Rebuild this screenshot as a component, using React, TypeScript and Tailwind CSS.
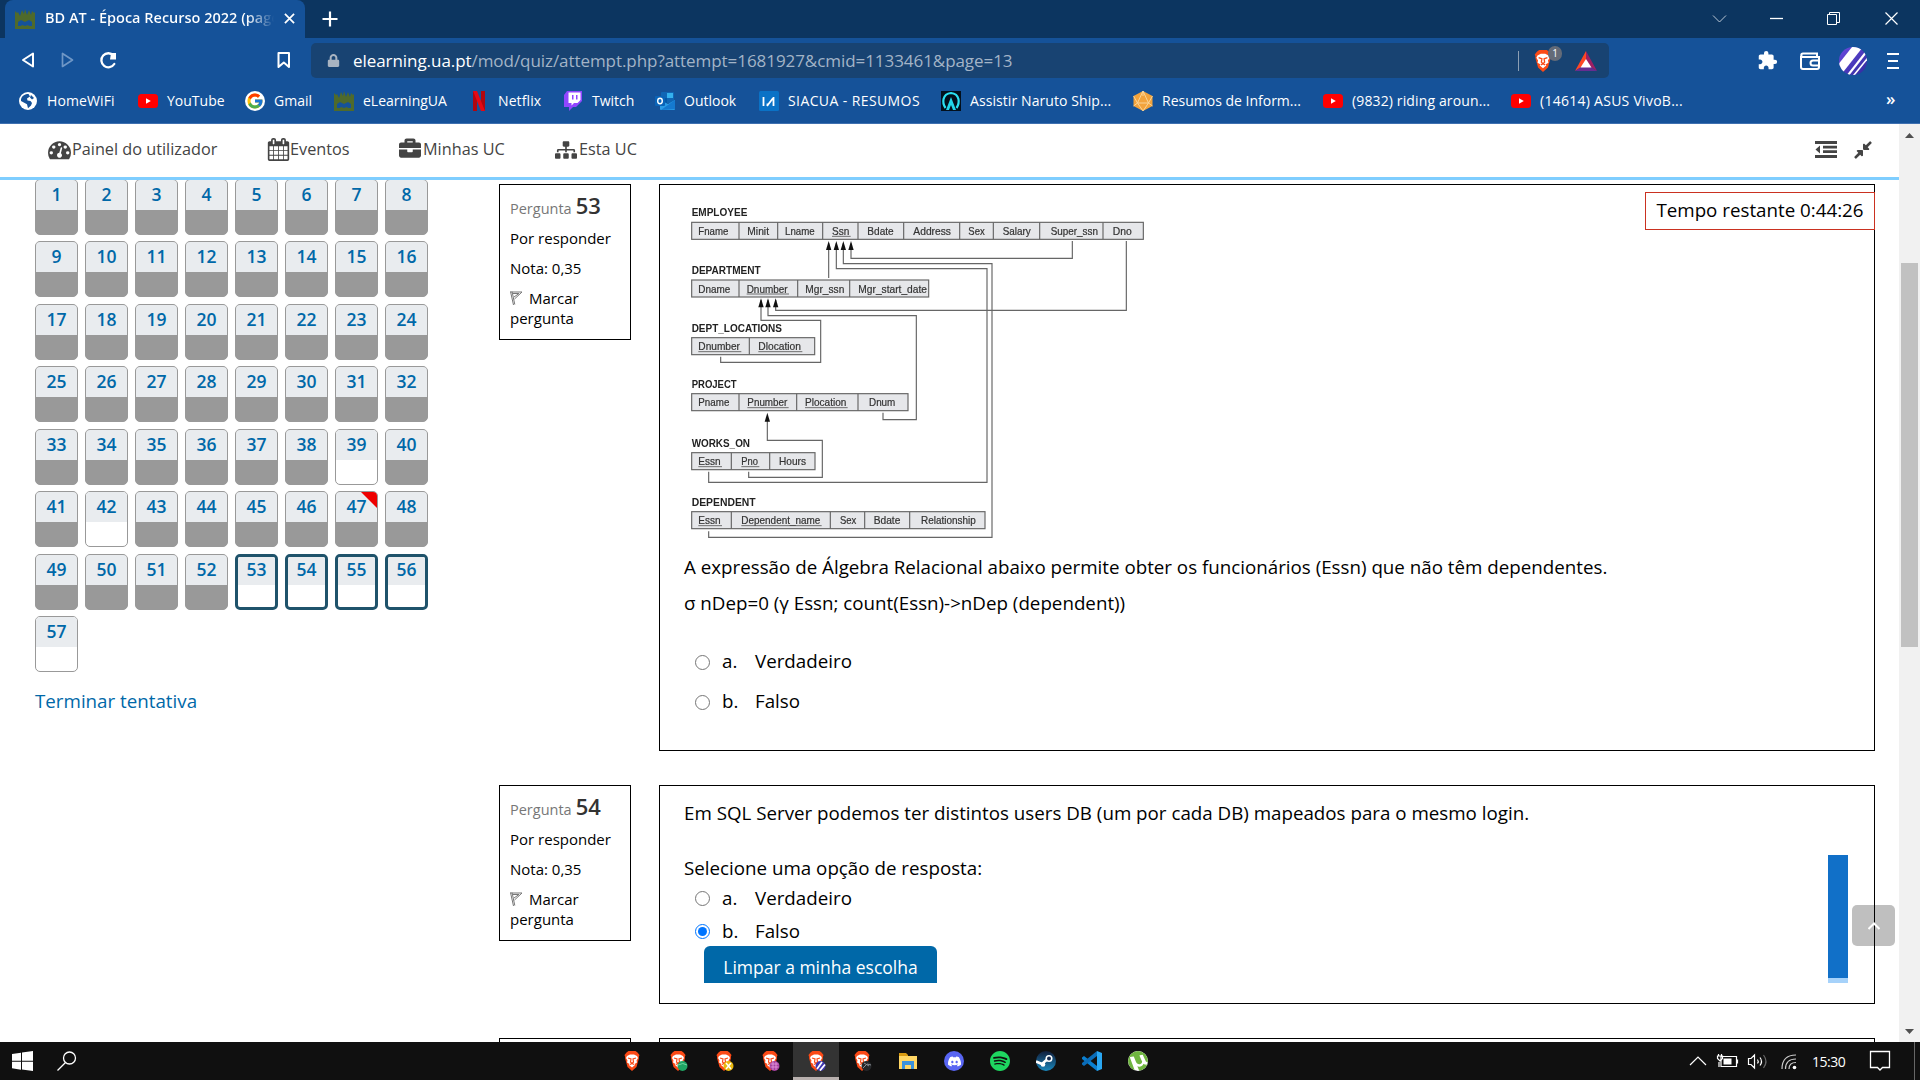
import React from "react";
import { FaBriefcase, FaSitemap, FaCompressAlt, FaLock } from "react-icons/fa";
import { MdExtension } from "react-icons/md";
import { SiDiscord, SiSpotify, SiUtorrent } from "react-icons/si";
import { FcGoogle } from "react-icons/fc";

/* ---------- browser icons ---------- */

const UaLogo = () => (
  <svg className="block h-5 w-5" viewBox="0 0 20 20">
    <path d="M0 20V2l2 2 1-1 2 4 2-6 2 4 1-5 2 6 2-5 2 5 1-4 2 2 1-1v17z" fill="#4f6a2b" />
    <path d="M3 13l3-2 4 2 4-2 3 2v4h-3l-1-1-3 1-3-1-1 1H3z" fill="#155299" />
  </svg>
);

const GlobeIcon = () => (
  <svg className="block h-5 w-5" viewBox="0 0 20 20">
    <circle cx="10" cy="10" r="9" fill="#fff" />
    <path d="M3 8.2C4 4.600 7 3 10.500 3L12 5.500 9 7.500l.5 2 3 .5 1.500 2-1 2.500-3 2.700-1-4L3 10z" fill="#155299" />
    <path d="M13 4l3 3-2 1.500-2-2z" fill="#155299" />
  </svg>
);

const YouTube = () => (
  <svg className="block h-5 w-5" viewBox="0 0 20 20">
    <rect x="0" y="3" width="20" height="14" rx="3.500" fill="#f00" />
    <path d="M8 7.200v5.600l4.800-2.800z" fill="#fff" />
  </svg>
);

const GoogleBadge = () => (
  <div className="flex h-5 w-5 items-center justify-center rounded-full bg-white">
    <FcGoogle size={18} />
  </div>
);

const Netflix = () => (
  <svg className="block h-5 w-5" viewBox="0 0 20 20">
    <path d="M2 0h4v20H2z" fill="#b1060f" />
    <path d="M10 0h4v20h-4z" fill="#b1060f" />
    <path d="M2 0h4l8 20h-4z" fill="#e50914" />
  </svg>
);

const Twitch = () => (
  <svg className="block h-5 w-5" viewBox="0 0 20 20">
    <path d="M3 0L0 4v12h5v4l4-4h3l6-6V0z" fill="#9146ff" />
    <path d="M4.500 1.500H16.500V9L13.500 12H10L7.500 14.500V12H4.500z" fill="#fff" />
    <path d="M8 4h1.500v4.500H8zM12 4h1.500v4.500H12z" fill="#9146ff" />
  </svg>
);

const Outlook = () => (
  <svg className="block h-5 w-5" viewBox="0 0 20 20">
    <rect x="6" y="1" width="13" height="11" rx="1" fill="#1066b5" />
    <rect x="12" y="2" width="6" height="5" fill="#35b1ee" />
    <rect x="6" y="7" width="6" height="5" fill="#0358a7" />
    <path d="M5 9l8 4 7-4v9a1 1 0 01-1 1H6a1 1 0 01-1-1z" fill="#2a9be6" />
    <path d="M20 9v9l-14 1z" fill="#1579cf" />
    <rect x="0" y="5" width="10" height="10" rx="1" fill="#0a64b8" />
    <ellipse cx="5" cy="10" rx="2.300" ry="2.700" fill="none" stroke="#fff" strokeWidth="1.400" />
  </svg>
);

const Siacua = () => (
  <svg className="block h-5 w-5" viewBox="0 0 20 20">
    <rect width="20" height="20" rx="1.500" fill="#0a72c6" />
    <path d="M4.500 6v9M8 15l6.500-8.500M8.500 12.500V15M14.500 6v9" fill="none" stroke="#fff" strokeWidth="1.800" />
  </svg>
);

const Anime = () => (
  <svg className="block h-5 w-5" viewBox="0 0 20 20">
    <rect width="20" height="20" fill="#03101d" />
    <path d="M4.500 17C1 12 1 3 10 2c9 1 9 10 5.500 15" fill="none" stroke="#2be0f2" strokeWidth="2.200" />
    <path d="M5 19l5-13 5 13h-3l-2-5-2 5z" fill="#22d5ea" />
  </svg>
);

const Dice = () => (
  <svg className="block h-5 w-5" viewBox="0 0 20 20">
    <path d="M10 0l9.500 5v10L10 20 .5 15V5z" fill="#f2a33c" />
    <path d="M10 0l5.500 12h-11zM4.500 12L10 20l5.500-8M.5 5L4.500 12 .5 15M19.500 5l-4 7 4 3M10 0v5" fill="none" stroke="#fbd9a0" strokeWidth=".9" />
  </svg>
);

const BraveIcon = ({ badge }: { badge?: React.ReactNode }) => (
  <svg className="block h-full w-full" viewBox="0 0 20 20">
    <path d="M4.500 1.500L6.500 0h7l2 1.500L17.500 4l-.7 2 .2 1-2.500 9-4.500 4-4.500-4L3 7l.2-1-.7-2z" fill="#fb4a16" />
    <path d="M5 5l3-1.500h4L15 5l1 2-1.500 2.500.500 2-2.500 1.500.5 1-3 2.500L7 14l.5-1L5 11.500l.500-2L4 7z" fill="#fff" />
    <path d="M6 7l3 1-.5 3L10 12.500 11.500 11 11 8l3-1M8 13.500l2-1 2 1" fill="none" stroke="#fb4a16" strokeWidth="1.200" />
    {badge}
  </svg>
);

const bookmarks = [
  { icon: <GlobeIcon />, label: "HomeWiFi", w: "w-[120px]", t: "tracking-[0.1px]" },
  { icon: <YouTube />, label: "YouTube", w: "w-[107px]", t: "" },
  { icon: <GoogleBadge />, label: "Gmail", w: "w-[89px]", t: "" },
  { icon: <UaLogo />, label: "eLearningUA", w: "w-[137px]", t: "" },
  { icon: <Netflix />, label: "Netflix", w: "w-[93px]", t: "tracking-[0.1px] -ml-[2px]" },
  { icon: <Twitch />, label: "Twitch", w: "w-[91px]", t: "-ml-px" },
  { icon: <Outlook />, label: "Outlook", w: "w-[104px]", t: "" },
  { icon: <Siacua />, label: "SIACUA - RESUMOS", w: "w-[182px]", t: "tracking-[0.4px]" },
  { icon: <Anime />, label: "Assistir Naruto Ship...", w: "w-[192px]", t: "tracking-[0.08px]" },
  { icon: <Dice />, label: "Resumos de Inform...", w: "w-[190px]", t: "" },
  { icon: <YouTube />, label: "(9832) riding aroun...", w: "w-[188px]", t: "tracking-[0.13px]" },
  { icon: <YouTube />, label: "(14614) ASUS VivoB...", w: "w-[190px]", t: "tracking-[0.27px]" },
];

function TabStrip() {
  return (
    <div className="flex h-[38px] items-stretch bg-[#0c3560] pl-[5px]">
      <div className="flex w-[300px] items-center rounded-t-lg bg-[#155299] pl-[10px]">
        <UaLogo />
        <div className="-mt-[2px] ml-[10px] w-[229px] overflow-hidden bg-linear-to-r from-white from-88% to-transparent bg-clip-text text-[14.5px] font-semibold whitespace-nowrap text-transparent">
          BD AT - Época Recurso 2022 (page
        </div>
        <svg className="-mt-px ml-[10px] h-[11px] w-[11px] shrink-0" viewBox="0 0 12 12" stroke="#fff" strokeWidth="1.900">
          <path d="M1 1l10 10M11 1L1 11" />
        </svg>
      </div>
      <svg className="mt-[11px] ml-[17px] h-4 w-4" viewBox="0 0 16 16" stroke="#fff" strokeWidth="2.200">
        <path d="M8 .5v15M.5 8h15" />
      </svg>
      <div className="ml-auto flex items-center">
        <svg className="h-[38px] w-[220px]" viewBox="1700 0 220 38" fill="none" stroke="#fff" strokeWidth="1">
          <path d="M1713 15.500l6.500 6.500 6.500-6.500" stroke="#bcc8d6" />
          <path d="M1770 18.500h13" strokeWidth="1.300" />
          <path d="M1827.500 14.500h9v10h-9zM1829.500 14.500v-2h10v10h-3" />
          <path d="M1885.500 12.500l12 12M1897.500 12.500l-12 12" strokeWidth="1.200" />
        </svg>
      </div>
    </div>
  );
}

function Toolbar() {
  return (
    <div className="flex h-[45px] items-center">
      <svg className="h-[45px] w-[311px] shrink-0" viewBox="0 38 311 45" fill="none" stroke="#fff" strokeWidth="2" strokeLinejoin="round">
        <path d="M33 53.500v13L23 60z" />
        <path d="M62.500 53.500v13l10-6.500z" stroke="#6f97c6" strokeWidth="1.700" />
        <path d="M113.500 55.500a7 7 0 10.8 8.500" strokeWidth="2.300" strokeLinecap="round" />
        <path d="M111 53h5v6.500h-6z" fill="#fff" stroke="none" />
        <path d="M278.500 53h10.500v14l-5.200-4.500-5.300 4.500z" />
      </svg>
      <div className="flex h-[35px] w-[1298px] items-center rounded-[5px] bg-[#184372]">
        <FaLock size={13} className="ml-[16px] text-[#a9b4c1]" />
        <div className="ml-[13px] text-[17px] tracking-[-0.06px] whitespace-nowrap text-[#a3b4c7]">
          <span className="text-white">elearning.ua.pt</span>/mod/quiz/attempt.php?attempt=1681927&amp;cmid=1133461&amp;page=13
        </div>
        <div className="ml-auto h-5 w-px bg-[#8c9fb4]" />
        <div className="relative ml-[13px] h-[22px] w-[22px]">
          <BraveIcon />
          <div className="absolute -top-[4px] left-[16px] flex h-[15px] w-[14px] items-center justify-center rounded-full bg-[#646b78] text-[10px] text-white">1</div>
        </div>
        <svg className="mr-[12px] ml-[21px] h-5 w-[22px]" viewBox="0 0 22 20">
          <path d="M11 0L0 20l11-7z" fill="#ff4724" />
          <path d="M11 0l11 20-11-7z" fill="#9e1f63" />
          <path d="M0 20h22l-6-4H6z" fill="#662d91" />
          <path d="M11 8l5.500 8.500h-11z" fill="#fff" />
        </svg>
      </div>
      <MdExtension size={21} className="ml-[148px] text-white" />
      <svg className="ml-[22px] h-[18px] w-5" viewBox="0 0 20 18" fill="none" stroke="#fff" strokeWidth="2">
        <path d="M1 4v11a2 2 0 002 2h14a2 2 0 002-2V5H3a1.500 1.500 0 010-3.500h14V5" />
        <path d="M19 8.500h-6a2.500 2.500 0 000 5h6" />
      </svg>
      <svg className="ml-[19px] h-7 w-7" viewBox="0 0 28 28">
        <defs>
          <clipPath id="avatar"><circle cx="14" cy="14" r="14" /></clipPath>
          <linearGradient id="avatarFill" x1="0" y1="0" x2="1" y2="1"><stop stopColor="#6a4be0" /><stop offset="1" stopColor="#2f2a9c" /></linearGradient>
        </defs>
        <g clipPath="url(#avatar)">
          <rect width="28" height="28" fill="url(#avatarFill)" />
          <path d="M-2 26L20-2" stroke="#fff" strokeWidth="8.500" />
          <path d="M6 32L28 4" stroke="#fff" strokeWidth="2.200" />
          <path d="M11 33L32 7" stroke="#fff" strokeWidth="1.600" />
        </g>
      </svg>
      <svg className="ml-[20px] h-4 w-3" viewBox="0 0 12 16" stroke="#fff" strokeWidth="2"><path d="M0 1h12M1 8h10M0 15h12" /></svg>
    </div>
  );
}

function Bookmarks() {
  return (
    <div className="flex h-[41px] items-center border-b border-[#3f70b0] pb-[5px] pl-[18px] text-[14px] text-white">
      {bookmarks.map((b) => (
        <div key={b.label} className={`flex shrink-0 items-center gap-[9px] whitespace-nowrap ${b.w}`}>
          <div className="w-5 shrink-0">{b.icon}</div>
          <span className={`-mt-px ${b.t}`}>{b.label}</span>
        </div>
      ))}
      <span className="-mt-[4px] ml-[185px] text-[17px] leading-none font-semibold">»</span>
    </div>
  );
}

/* ---------- page ---------- */

const GaugeIcon = () => (
  <svg className="h-[23px] w-[23px]" viewBox="0 0 1792 1792" fill="currentColor">
    <path d="M384 1152q0-53-37.500-90.500t-90.500-37.500-90.500 37.500-37.500 90.500 37.500 90.500 90.500 37.500 90.500-37.500 37.500-90.500zm192-448q0-53-37.500-90.500t-90.500-37.500-90.500 37.500-37.500 90.500 37.500 90.500 90.500 37.500 90.500-37.500 37.500-90.500zm428 481l101-382q6-26-7.500-48.500t-38.500-29.500-48 6.500-30 39.500l-101 382q-60 5-107 43.500t-63 98.500q-20 77 20 146t117 89 146-20 89-117q16-60-6-117t-72-91zm660-33q0-53-37.500-90.500t-90.500-37.500-90.500 37.500-37.500 90.500 37.500 90.500 90.500 37.500 90.500-37.500 37.500-90.500zm-640-640q0-53-37.500-90.500t-90.500-37.500-90.500 37.500-37.500 90.500 37.500 90.500 90.500 37.500 90.500-37.500 37.500-90.500zm448 192q0-53-37.500-90.500t-90.500-37.500-90.500 37.500-37.500 90.500 37.500 90.500 90.500 37.500 90.500-37.500 37.500-90.500zm320 448q0 261-141 483-19 29-54 29h-1402q-35 0-54-29-141-221-141-483 0-182 71-348t191-286 286-191 348-71 348 71 286 191 191 286 71 348z" />
  </svg>
);

const CalendarIcon = () => (
  <svg className="-mt-px h-[23px] w-[23px]" viewBox="0 0 1792 1792" fill="currentColor">
    <path d="M192 1664h288v-288h-288v288zm352 0h320v-288h-320v288zm-352-352h288v-320h-288v320zm352 0h320v-320h-320v320zm-352-384h288v-288h-288v288zm736 736h320v-288h-320v288zm-384-736h320v-288h-320v288zm768 736h288v-288h-288v288zm-384-352h320v-320h-320v320zm-352-864v-288q0-13-9.500-22.500t-22.500-9.500h-64q-13 0-22.500 9.500t-9.500 22.500v288q0 13 9.500 22.500t22.500 9.500h64q13 0 22.500-9.500t9.500-22.500zm736 864h288v-320h-288v320zm-384-384h320v-288h-320v288zm384 0h288v-288h-288v288zm32-480v-288q0-13-9.500-22.500t-22.500-9.500h-64q-13 0-22.500 9.500t-9.500 22.500v288q0 13 9.500 22.500t22.500 9.500h64q13 0 22.500-9.500t9.500-22.500zm384-64v1280q0 52-38 90t-90 38h-1408q-52 0-90-38t-38-90v-1280q0-52 38-90t90-38h128v-96q0-66 47-113t113-47h64q66 0 113 47t47 113v96h384v-96q0-66 47-113t113-47h64q66 0 113 47t47 113v96h128q52 0 90 38t38 90z" />
  </svg>
);

function PageNav() {
  return (
    <div className="flex h-[56px] shrink-0 items-center border-b-[3px] border-[#7fceff] pb-[2px] pl-[48px] text-[16.25px] text-[#444]">
      <div className="flex w-[219px] items-center gap-px"><GaugeIcon /><span>Painel do utilizador</span></div>
      <div className="flex w-[132px] items-center gap-0"><CalendarIcon /><span>Eventos</span></div>
      <div className="flex w-[156px] items-center gap-[2px]"><FaBriefcase size={22} className="-mt-[3px]" /><span>Minhas UC</span></div>
      <div className="flex items-center gap-[2px]"><FaSitemap size={22} /><span>Esta UC</span></div>
      <svg className="ml-auto h-[17px] w-[22px]" viewBox="0 0 22 17" fill="#444">
        <path d="M0 0h22v3H0zM8 4.800h14v2.700H8zM8 9.300h14V12H8zM0 14h22v3H0zM5 4.500v8L.5 8.500z" />
      </svg>
      <FaCompressAlt size={20} className="mr-[26px] ml-[16px]" />
    </div>
  );
}

const blank = [39, 42, 53, 54, 55, 56, 57];
const current = [53, 54, 55, 56];

function QuestionNav() {
  return (
    <div className="w-[499px] shrink-0 pl-[35px]">
      <div className="mt-[-1.2px] grid auto-rows-[62.5px] grid-cols-[repeat(8,50px)]">
        {Array.from({ length: 57 }, (_, i) => i + 1).map((n) => (
          <div
            key={n}
            className={`relative h-[56px] w-[43px] overflow-hidden rounded-[5px] ${
              current.includes(n) ? "border-[3px] border-[#1f536b]" : "border border-[#999]"
            } ${blank.includes(n) ? "bg-white" : "bg-[#999]"}`}
          >
            <div
              className={`flex items-center justify-center bg-[#e9ecef] text-[17.5px] font-semibold text-[#0068a8] ${
                current.includes(n) ? "h-[28px] pb-[4px]" : "h-[30px] pb-[2px]"
              }`}
            >
              {n}
            </div>
            {n === 47 && (
              <svg className="absolute top-0 right-0 h-4 w-4" viewBox="0 0 16 16"><path d="M0 0h16v16z" fill="#e00" /></svg>
            )}
          </div>
        ))}
      </div>
      <div className="mt-[8px] text-[18.75px] text-[#0068a8]">Terminar tentativa</div>
    </div>
  );
}

const FlagIcon = () => (
  <svg className="mr-[6px] inline-block h-[14px] w-[13px] align-[-1px]" viewBox="0 0 13 14" fill="none" stroke="#777" strokeWidth="1">
    <path d="M.5.500l3 13.500M2 .5l2.800 13M.5 1h11.500L4.500 8M3 2.500h6L4 6" />
  </svg>
);

function InfoBox({ n }: { n: number }) {
  return (
    <div className="h-[156px] w-[132px] shrink-0 border border-black pt-[4px] pl-[10px] text-[15px] text-black">
      <div className="flex h-[34px] items-baseline gap-1">
        <span className="text-[14.500px] text-[#777]">Pergunta</span>
        <span className="text-[22px] leading-[32px] font-semibold text-[#333]">{n}</span>
      </div>
      <div className="h-[30px] leading-[30px]">Por responder</div>
      <div className="h-[32px] leading-[30px]">Nota: 0,35</div>
      <div className="mt-[3px] leading-[20px]"><FlagIcon />Marcar<br />pergunta</div>
    </div>
  );
}

/* Relational schema drawing */
type Cell = [string, number, number, boolean?];
const tables: { name: string; nameWidth: number; y: number; bounds: number[]; cells: Cell[] }[] = [
  {
    name: "EMPLOYEE", nameWidth: 167, y: 97, bounds: [65, 207, 323, 458, 564, 701, 869, 970, 1109, 1299, 1420],
    cells: [["Fname", 85, 90], ["Minit", 232, 65], ["Lname", 345, 89], ["Ssn", 486, 52, true], ["Bdate", 592, 79], ["Address", 730, 113], ["Sex", 895, 49], ["Salary", 998, 84], ["Super_ssn", 1142, 142], ["Dno", 1328, 57]],
  },
  {
    name: "DEPARTMENT", nameWidth: 207, y: 270, bounds: [65, 207, 383, 539, 776],
    cells: [["Dname", 85, 96], ["Dnumber", 230, 123, true], ["Mgr_ssn", 406, 117], ["Mgr_start_date", 565, 206]],
  },
  {
    name: "DEPT_LOCATIONS", nameWidth: 271, y: 443, bounds: [65, 238, 434],
    cells: [["Dnumber", 85, 125, true], ["Dlocation", 265, 128, true]],
  },
  {
    name: "PROJECT", nameWidth: 135, y: 611, bounds: [65, 207, 380, 564, 714],
    cells: [["Pname", 85, 93], ["Pnumber", 232, 120, true], ["Plocation", 405, 124, true], ["Dnum", 597, 79]],
  },
  {
    name: "WORKS_ON", nameWidth: 175, y: 788, bounds: [65, 184, 299, 435],
    cells: [["Essn", 85, 67, true], ["Pno", 214, 50, true], ["Hours", 327, 81]],
  },
  {
    name: "DEPENDENT", nameWidth: 192, y: 965, bounds: [65, 184, 481, 584, 719, 945],
    cells: [["Essn", 85, 67, true], ["Dependent_name", 214, 237, true], ["Sex", 510, 49], ["Bdate", 611, 80], ["Relationship", 753, 164]],
  },
];
const arrows: [number, number][] = [[476, 153], [499, 153], [520, 153], [543, 153], [273, 325], [294, 325], [317, 325], [292, 668]];

function Schema() {
  return (
    <svg className="block h-[364px] w-[480px] font-['Liberation_Sans'] blur-[0.3px]" viewBox="42 -15 1440 1092">
      <g fill="none" stroke="#666" strokeWidth="3.500">
        <path d="M476 160V264M543 160V205H1207V153M520 160V221H966V1042H116V1024M499 160V236H951V877H116V845" />
        <path d="M317 330V361H1369V153M294 330V377H739V689H639V668M273 330V391H452V517H152V500M292 680V751H457V862H236V845" />
      </g>
      {arrows.map(([x, y]) => (
        <path key={`${x}-${y}`} d={`M${x} ${y}l8 27h-16z`} fill="#111" />
      ))}
      {tables.map((t) => (
        <g key={t.name}>
          <text x="65" y={t.y - 18} textLength={t.nameWidth} lengthAdjust="spacingAndGlyphs" fontSize="32" fontWeight="700" fill="#222">{t.name}</text>
          <rect x="65" y={t.y} width={t.bounds[t.bounds.length - 1] - 65} height="51" fill="#e6e7ea" stroke="#666" strokeWidth="3.500" />
          {t.bounds.slice(1, -1).map((b) => (
            <path key={b} d={`M${b} ${t.y}v51`} stroke="#666" strokeWidth="3.500" />
          ))}
          {t.cells.map(([label, x, w, key]) => (
            <g key={label}>
              <text x={x} y={t.y + 38} textLength={w} lengthAdjust="spacingAndGlyphs" fontSize="31" fill="#333" stroke="#333" strokeWidth=".6">{label}</text>
              {key && <path d={`M${x} ${t.y + 42}h${w + 4}`} stroke="#555" strokeWidth="2.500" />}
            </g>
          ))}
        </g>
      ))}
    </svg>
  );
}

function Option({ letter, label, checked, className }: { letter: string; label: string; checked?: boolean; className: string }) {
  return (
    <div className={`flex items-center pl-[11px] ${className}`}>
      <div className={`flex h-[15px] w-[15px] items-center justify-center rounded-full border ${checked ? "border-[#0075ff]" : "border-[#767676]"}`}>
        {checked && <div className="h-[9px] w-[9px] rounded-full bg-[#0075ff]" />}
      </div>
      <span className="-mt-px ml-[12px] w-[33px]">{letter}</span>
      <span className="-mt-px">{label}</span>
    </div>
  );
}

function Questions() {
  return (
    <div className="relative w-[1376px] shrink-0 pt-[4px] text-[18.75px] text-black">
      <div className="flex h-[601px] items-start gap-[28px]">
        <InfoBox n={53} />
        <div className="h-[567px] w-[1216px] border border-black pl-[24px]">
          <Schema />
          <div className="h-[36px] leading-[36px]">A expressão de Álgebra Relacional abaixo permite obter os funcionários (Essn) que não têm dependentes.</div>
          <div className="mb-[21px] h-[36px] leading-[36px]">σ nDep=0 (γ Essn; count(Essn)-&gt;nDep (dependent))</div>
          <Option letter="a." label="Verdadeiro" className="h-[40px]" />
          <Option letter="b." label="Falso" className="h-[40px]" />
        </div>
      </div>
      <div className="flex h-[253px] items-start gap-[28px]">
        <InfoBox n={54} />
        <div className="h-[219px] w-[1216px] border border-black pt-[9px] pl-[24px]">
          <div className="mb-[19px] h-[36px] leading-[36px]">Em SQL Server podemos ter distintos users DB (um por cada DB) mapeados para o mesmo login.</div>
          <div className="h-[36px] leading-[36px]">Selecione uma opção de resposta:</div>
          <Option letter="a." label="Verdadeiro" className="h-[25px]" />
          <Option letter="b." label="Falso" checked className="mt-[6px] h-[29px]" />
          <div className="ml-[20px] flex h-[37px] w-[233px] items-center justify-center rounded-t-[6px] bg-[#0068a8] pt-[6px] text-[17.5px] text-white">Limpar a minha escolha</div>
        </div>
      </div>
      <div className="flex gap-[28px]">
        <div className="h-5 w-[132px] border border-black" />
        <div className="h-5 w-[1216px] border border-black" />
      </div>
      <div className="absolute top-[12px] right-0 flex h-[38px] w-[230px] items-center justify-center border border-[#ca3120] bg-white pb-px">Tempo restante 0:44:26</div>
      <div className="absolute top-[675px] left-[1329px] h-[128px] w-5 border-b-[5px] border-[#a6d2fa] bg-[#1170c8]" />
      <div className="absolute top-[725px] left-[1353px] flex h-[41px] w-[43px] items-center justify-center rounded-[5px] bg-black/25">
        <svg className="h-2 w-3" viewBox="0 0 12 8" fill="none" stroke="#fff" strokeWidth="2"><path d="M.5 7L6 1.500 11.500 7" /></svg>
      </div>
    </div>
  );
}

function Scrollbar() {
  return (
    <div className="flex w-[21px] shrink-0 flex-col items-center bg-[#f1f1f1]">
      <svg className="mt-[9px] h-[5px] w-[9px]" viewBox="0 0 9 5"><path d="M4.500 0L9 5H0z" fill="#505050" /></svg>
      <div className="mt-[125px] h-[384px] w-[17px] bg-[#c1c1c1]" />
      <svg className="mt-auto mb-[8px] h-[5px] w-[9px]" viewBox="0 0 9 5"><path d="M4.500 5L9 0H0z" fill="#505050" /></svg>
    </div>
  );
}

/* ---------- taskbar ---------- */

const taskIcons: React.ReactNode[] = [
  <BraveIcon />,
  <BraveIcon badge={<><circle cx="14.500" cy="15" r="5" fill="#1fa463" /><path d="M10 14q5-3 9 0" stroke="#6dd6a0" fill="none" /></>} />,
  <BraveIcon badge={<><circle cx="14.500" cy="15" r="5" fill="#e9b90f" /><path d="M12 12l5 6M17 12l-5 6" stroke="#fff" strokeWidth="1.500" /></>} />,
  <BraveIcon badge={<><circle cx="14.500" cy="15" r="5" fill="#a63fa0" /><path d="M10.500 13h8M10.500 16h8M13 11v8M16 11v8" stroke="#e7a0df" strokeWidth=".8" /></>} />,
  <BraveIcon badge={<><circle cx="14.500" cy="15" r="5" fill="#3d35b0" /><path d="M11 18l5-7M14 19.500l5-6" stroke="#fff" strokeWidth="1.800" /></>} />,
  <BraveIcon badge={<><circle cx="14.500" cy="15" r="5" fill="#26282b" /><path d="M11 17l4-4 4 1M12 12l5 3" stroke="#8b8f94" fill="none" /></>} />,
  <svg className="h-5 w-5" viewBox="0 0 20 20">
    <path d="M1 2h7l2 2v3H1z" fill="#d99b12" />
    <path d="M1 5h18v13H1z" fill="#ffd664" />
    <path d="M4 18v-8h12v8h-3v-4H7v4z" fill="#3b92dc" />
  </svg>,
  <div className="flex h-5 w-5 items-center justify-center rounded-full bg-[#5865f2]"><SiDiscord size={13} color="#fff" /></div>,
  <SiSpotify size={20} color="#1ed760" />,
  <svg className="h-5 w-5" viewBox="0 0 20 20">
    <defs><linearGradient id="steam" x1="0" y1="0" x2="0" y2="1"><stop stopColor="#111d3a" /><stop offset="1" stopColor="#1a88bd" /></linearGradient></defs>
    <circle cx="10" cy="10" r="10" fill="url(#steam)" />
    <path d="M0 10.500l6 2.500 4.500-4" stroke="#fff" strokeWidth="2.600" fill="none" />
    <circle cx="13" cy="7.500" r="3.500" fill="#fff" /><circle cx="13" cy="7.500" r="2" fill="#14294d" />
    <circle cx="7" cy="13.500" r="2.300" fill="#fff" />
  </svg>,
  <svg className="h-5 w-5" viewBox="0 0 20 20">
    <path d="M0 6.500L2 5l13 10v5L0 8z" fill="#0a7fd0" />
    <path d="M0 13.500L2 15 15 5V0L0 12z" fill="#0a6cb8" />
    <path d="M15 0l5 2v16l-5 2z" fill="#2aa7f2" />
  </svg>,
  <SiUtorrent size={20} color="#6fb53f" className="rounded-full bg-white" />,
];

function Taskbar() {
  return (
    <div className="flex h-[38px] items-center bg-[#101010]">
      <svg className="ml-[12px] h-5 w-[21px]" viewBox="0 0 21 20" fill="#fff">
        <path d="M0 3l9-1.300v8H0zM10 1.500L21 0v9.700H10zM0 10.700h9v8L0 17.300zM10 10.700h11V20l-11-1.500z" />
      </svg>
      <svg className="ml-[24px] h-5 w-5" viewBox="0 0 20 20" fill="none" stroke="#fff" strokeWidth="1.300">
        <circle cx="12.500" cy="7" r="6" /><path d="M8.500 11.500L.5 19.500" />
      </svg>
      <div className="ml-[532px] flex h-full">
        {taskIcons.map((icon, i) => (
          <div key={i} className={`flex h-full w-[46px] items-center justify-center ${i === 4 ? "border-b-[3px] border-[#b8b0ae] bg-[#333] pt-[3px]" : ""}`}>
            <div className="flex h-5 w-5 items-center justify-center">{icon}</div>
          </div>
        ))}
      </div>
      <svg className="ml-auto h-[38px] w-[120px]" viewBox="1685 1042 120 38" fill="none" stroke="#fff" strokeWidth="1.200">
        <path d="M1690 1065l8-8 8 8" />
        <path d="M1721 1056.500h15.500v10H1721z" /><path d="M1723.500 1058.500h8v6h-8z" fill="#fff" stroke="none" /><path d="M1737.500 1059.500v4M1719 1067v-5M1717.500 1056h5v2.500l-2.500 2.500-2.500-2.500zM1718.500 1056v-2M1721.500 1056v-2" />
        <path d="M1748.500 1058.500h2.500l3.500-3.500v13l-3.500-3.500h-2.500zM1757.500 1059.500q1.500 2 0 4M1760 1057.500q3 4 0 8" /><path d="M1763.500 1055q5 6.500 0 13" stroke="#666" />
        <path d="M1782 1069q0-14 14-14M1785.500 1069q0-10 10.500-10M1789 1069q0-6.500 7-6.500" stroke="#ccc" /><circle cx="1794.500" cy="1067.500" r="1.800" fill="#fff" stroke="none" />
      </svg>
      <span className="ml-[7px] w-[35px] text-[14px] tracking-[-0.5px] text-white">15:30</span>
      <svg className="ml-[22px] h-[38px] w-[22px]" viewBox="1868 1042 22 38" fill="none" stroke="#fff" strokeWidth="1.300">
        <path d="M1869.500 1051.500h19v16h-7l-2.500 2.500-2.500-2.500h-7z" />
      </svg>
      <div className="mr-[5px] ml-[23px] h-full w-px bg-[#666]" />
    </div>
  );
}

export default function App() {
  return (
    <div className="flex h-[1080px] w-[1920px] flex-col overflow-hidden bg-white font-['Open_Sans',sans-serif]">
      <header className="h-[124px] shrink-0 bg-[#155299]">
        <TabStrip />
        <Toolbar />
        <Bookmarks />
      </header>
      <div className="flex h-[918px] shrink-0">
        <main className="flex w-[1899px] flex-col overflow-hidden">
          <PageNav />
          <div className="flex h-[862px] overflow-hidden">
            <QuestionNav />
            <Questions />
          </div>
        </main>
        <Scrollbar />
      </div>
      <Taskbar />
    </div>
  );
}
